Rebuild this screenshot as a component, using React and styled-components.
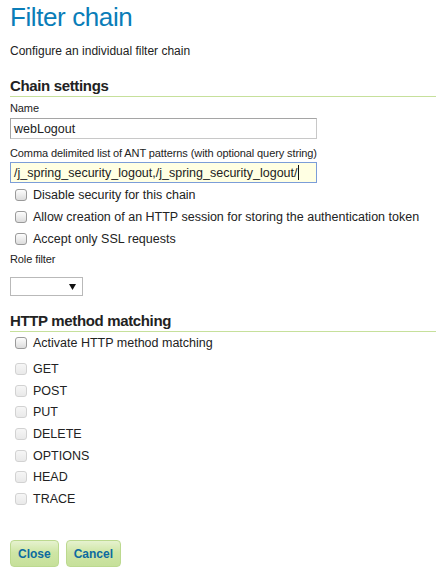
import React from "react";
import styled, { createGlobalStyle } from "styled-components";

const Global = createGlobalStyle`
  html, body { margin: 0; padding: 0; background: #fff; }
  body { font-family: "Liberation Sans", Arial, sans-serif; color: #222; }
`;

const Page = styled.div`
  width: 436px;
  height: 570px;
  padding: 0 0 0 10px;
  box-sizing: border-box;
  display: flex;
  flex-direction: column;
  overflow: hidden;
`;

const Title = styled.h1`
  margin: 1px 0 0;
  font-size: 26px;
  line-height: 32px;
  font-weight: normal;
  letter-spacing: -0.4px;
  color: #0a7db8;
`;

const Subtitle = styled.p`
  margin: 10px 0 0;
  font-size: 12px;
  line-height: 16px;
  color: #222;
`;

const SectionTitle = styled.h2`
  margin: ${(p) => p.$mt}px 0 0;
  font-size: 15px;
  line-height: 18px;
  font-weight: bold;
  letter-spacing: -0.35px;
  color: #222;
  padding-bottom: 1px;
  border-bottom: 1px solid #c6e09b;
`;

const FieldLabel = styled.label`
  display: block;
  margin-top: ${(p) => p.$mt}px;
  font-size: 11px;
  line-height: 14px;
  letter-spacing: -0.1px;
  color: #222;
`;

const TextInput = styled.div`
  margin-top: ${(p) => p.$mt}px;
  width: 307px;
  height: 21px;
  box-sizing: border-box;
  padding: 0 3px;
  display: flex;
  align-items: center;
  font-size: 12.5px;
  color: #222;
  background: ${(p) => (p.$focused ? "#ffffe3" : "#fff")};
  border: 1px solid ${(p) => (p.$focused ? "#7b9dd8" : "#c8c8c8")};
  ${(p) =>
    !p.$focused &&
    `border-top-color: #a5a5a5; border-left-color: #a5a5a5;`}
  white-space: nowrap;
  overflow: hidden;
`;

const Caret = styled.span`
  display: inline-block;
  width: 1px;
  height: 15px;
  background: #111;
`;

const CheckRow = styled.label`
  display: flex;
  align-items: center;
  height: ${(p) => p.$h}px;
  padding-left: 5px;
  gap: 6px;
  font-size: 12.5px;
  color: #222;
`;

const Box = styled.span`
  width: 12px;
  height: 12px;
  box-sizing: border-box;
  border-radius: 3px;
  border: 1px solid ${(p) => (p.$disabled ? "#d2d2d2" : "#9a9a9a")};
  background: ${(p) =>
    p.$disabled
      ? "linear-gradient(#f6f6f6, #e9e9e9)"
      : "linear-gradient(#fdfdfd, #dcdcdc)"};
  flex: none;
`;

const Checks = styled.div`
  display: flex;
  flex-direction: column;
  margin-top: ${(p) => p.$mt}px;
`;

const Select = styled.div`
  margin-top: 11px;
  width: 73px;
  height: 19px;
  box-sizing: border-box;
  border: 1px solid #b9b9b9;
  display: flex;
  align-items: center;
  justify-content: flex-end;
  padding-right: 6px;
`;

const Buttons = styled.div`
  display: flex;
  gap: 7px;
  margin-top: auto;
  margin-bottom: 3px;
`;

const Button = styled.button`
  height: 27px;
  padding: 0 ${(p) => p.$px}px;
  border: 1px solid #bcd98f;
  border-radius: 4px;
  background: linear-gradient(#e6f2cf 0%, #cfe6a6 45%, #c6e09a 100%);
  font-family: "Liberation Sans", Arial, sans-serif;
  font-weight: bold;
  font-size: 12px;
  color: #0c6aa0;
  cursor: pointer;
`;

const Check = ({ children, disabled, h = 22 }) => (
  <CheckRow $h={h}>
    <Box $disabled={disabled} />
    <span>{children}</span>
  </CheckRow>
);

const methods = ["GET", "POST", "PUT", "DELETE", "OPTIONS", "HEAD", "TRACE"];

export default function App() {
  return (
    <>
      <Global />
      <Page>
        <Title>Filter chain</Title>
        <Subtitle>Configure an individual filter chain</Subtitle>

        <SectionTitle $mt={18}>Chain settings</SectionTitle>
        <FieldLabel $mt={4}>Name</FieldLabel>
        <TextInput $mt={3}>webLogout</TextInput>
        <FieldLabel $mt={7}>
          Comma delimited list of ANT patterns (with optional query string)
        </FieldLabel>
        <TextInput $mt={2} $focused>
          /j_spring_security_logout,/j_spring_security_logout/
          <Caret />
        </TextInput>
        <Checks $mt={1}>
          <Check>Disable security for this chain</Check>
          <Check>Allow creation of an HTTP session for storing the authentication token</Check>
          <Check>Accept only SSL requests</Check>
        </Checks>
        <FieldLabel $mt={2}>Role filter</FieldLabel>
        <Select>
          <svg width="7" height="6" viewBox="0 0 7 6">
            <polygon points="0,0 7,0 3.5,6" fill="#111" />
          </svg>
        </Select>

        <SectionTitle $mt={16}>HTTP method matching</SectionTitle>
        <Checks $mt={0}>
          <Check>Activate HTTP method matching</Check>
        </Checks>
        <Checks $mt={4}>
          {methods.map((m) => (
            <Check key={m} disabled h={21.7}>
              {m}
            </Check>
          ))}
        </Checks>

        <Buttons>
          <Button $px={7}>Close</Button>
          <Button $px={7}>Cancel</Button>
        </Buttons>
      </Page>
    </>
  );
}
